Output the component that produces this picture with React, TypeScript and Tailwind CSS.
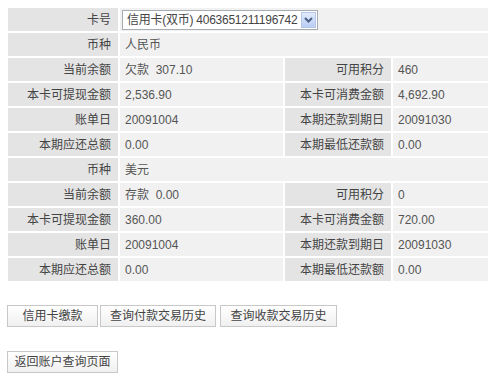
const font = "font-['Liberation_Sans','Noto_Sans_CJK_SC',sans-serif]";

type Cell = { label: string; value: string; label2?: string; value2?: string; select?: boolean };

const rows: Cell[] = [
  { label: "卡号", value: "信用卡(双币) 4063651211196742", select: true },
  { label: "币种", value: "人民币" },
  { label: "当前余额", value: "欠款  307.10", label2: "可用积分", value2: "460" },
  { label: "本卡可提现金额", value: "2,536.90", label2: "本卡可消费金额", value2: "4,692.90" },
  { label: "账单日", value: "20091004", label2: "本期还款到期日", value2: "20091030" },
  { label: "本期应还总额", value: "0.00", label2: "本期最低还款额", value2: "0.00" },
  { label: "币种", value: "美元" },
  { label: "当前余额", value: "存款  0.00", label2: "可用积分", value2: "0" },
  { label: "本卡可提现金额", value: "360.00", label2: "本卡可消费金额", value2: "720.00" },
  { label: "账单日", value: "20091004", label2: "本期还款到期日", value2: "20091030" },
  { label: "本期应还总额", value: "0.00", label2: "本期最低还款额", value2: "0.00" },
];

function Label({ text }: { text: string }) {
  return (
    <div className="h-[23px] bg-[#e4e4e4] flex items-center justify-end pr-[7px] text-[12px] text-[#444]">
      {text}
    </div>
  );
}

function Value({ text, span }: { text: string; span?: boolean }) {
  return (
    <div
      className={`h-[23px] bg-[#f1f1f1] flex items-center pl-[5px] text-[12px] text-[#555] whitespace-pre ${span ? "col-span-3" : ""}`}
    >
      {text}
    </div>
  );
}

function FakeSelect({ text }: { text: string }) {
  return (
    <div className="col-span-3 h-[23px] bg-[#f1f1f1] flex items-center pl-[2px]">
      <div className="h-[20px] w-[196px] bg-white border border-[#a5acb2] flex items-center justify-between pl-[4px] pr-[1px]">
        <span className="text-[12px] text-[#444] whitespace-pre tracking-[-0.25px]">{text}</span>
        <div className="w-[15px] h-[16px] border border-[#b5c7e8] bg-gradient-to-b from-[#e2ebfd] to-[#b8cdf5] flex items-center justify-center">
          <svg width="9" height="6" viewBox="0 0 9 6">
            <path d="M1 1 L4.5 4.5 L8 1" stroke="#4d6185" strokeWidth="2" fill="none" />
          </svg>
        </div>
      </div>
    </div>
  );
}

function Btn({ text, w }: { text: string; w: string }) {
  return (
    <button
      className={`${w} h-[22px] border border-[#c8c8c8] bg-gradient-to-b from-white to-[#f0f0f0] text-[12px] text-[#444] flex items-center justify-center`}
    >
      {text}
    </button>
  );
}

export default function App() {
  return (
    <div className={`w-[500px] h-[391px] bg-white pt-[8px] pl-[8px] ${font}`}>
      <div className="grid grid-cols-[110px_163px_106px_95px] gap-[2px] w-[480px]">
        {rows.map((r, i) =>
          r.select ? (
            [<Label key={`l${i}`} text={r.label} />, <FakeSelect key={`s${i}`} text={r.value} />]
          ) : r.label2 ? (
            [
              <Label key={`l${i}`} text={r.label} />,
              <Value key={`v${i}`} text={r.value} />,
              <Label key={`l2${i}`} text={r.label2} />,
              <Value key={`v2${i}`} text={r.value2 ?? ""} />,
            ]
          ) : (
            [<Label key={`l${i}`} text={r.label} />, <Value key={`v${i}`} text={r.value} span />]
          )
        )}
      </div>
      <div className="flex gap-[2px] mt-[24px] ml-[-1px]">
        <Btn text="信用卡缴款" w="w-[91px]" />
        <Btn text="查询付款交易历史" w="w-[116px]" />
        <Btn text="查询收款交易历史" w="w-[117px] ml-[2px]" />
      </div>
      <div className="mt-[24px] ml-[-1px]">
        <Btn text="返回账户查询页面" w="w-[111px]" />
      </div>
    </div>
  );
}
